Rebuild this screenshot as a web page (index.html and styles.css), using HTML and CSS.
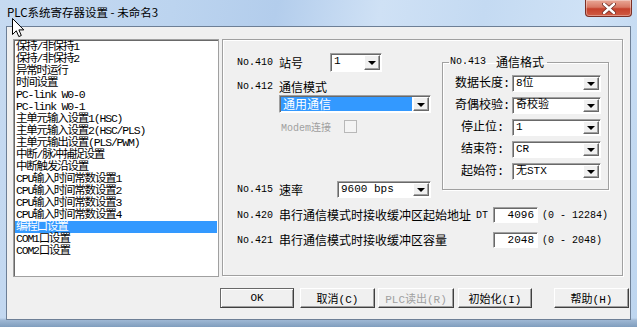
FILE: index.html
```html
<!DOCTYPE html>
<html lang="zh-CN">

<head>
    <meta charset="UTF-8">
    <meta name="viewport" content="width=device-width, initial-scale=1.0">
    <title>PLC系统寄存器设置</title>
    <link rel="stylesheet" href="styles.css">
</head>

<body>

    <div class="window">
        <div class="titlebar">
            <span class="title">PLC系统寄存器设置 - 未命名3</span>
            <div class="close">
                <svg width="14" height="11" viewBox="0 0 14 11">
                    <path d="M2 1 L12 10 M12 1 L2 10" stroke="#6b2a22" stroke-width="4" stroke-linecap="round" />
                    <path d="M2 1 L12 10 M12 1 L2 10" stroke="#fff" stroke-width="2.4" stroke-linecap="round" />
                </svg>
            </div>
        </div>

        <div class="client">
            <div class="main">
                <ul class="list">
                    <li>保持/非保持1</li>
                    <li>保持/非保持2</li>
                    <li>异常时运行</li>
                    <li>时间设置</li>
                    <li>PC-link W0-0</li>
                    <li>PC-link W0-1</li>
                    <li>主单元输入设置1(HSC)</li>
                    <li>主单元输入设置2(HSC/PLS)</li>
                    <li>主单元输出设置(PLS/PWM)</li>
                    <li>中断/脉冲捕捉设置</li>
                    <li>中断触发沿设置</li>
                    <li>CPU输入时间常数设置1</li>
                    <li>CPU输入时间常数设置2</li>
                    <li>CPU输入时间常数设置3</li>
                    <li>CPU输入时间常数设置4</li>
                    <li class="selected">编程口设置</li>
                    <li>COM1口设置</li>
                    <li>COM2口设置</li>
                </ul>

                <div class="panel">
                    <div class="top">
                        <div class="left">
                            <div class="row r410">
                                <span class="no">No.410</span>
                                <span class="lbl w-station">站号</span>
                                <div class="combo c-station"><span class="val">1</span><span class="drop"></span></div>
                            </div>
                            <div class="row r412">
                                <span class="no">No.412</span>
                                <span class="lbl">通信模式</span>
                            </div>
                            <div class="combo c-mode sel"><span class="val">通用通信</span><span class="drop"></span></div>
                            <div class="row modem">
                                <span class="disabled">Modem连接</span>
                                <span class="check"></span>
                            </div>
                            <div class="row r415">
                                <span class="no">No.415</span>
                                <span class="lbl w-rate">速率</span>
                                <div class="combo c-rate"><span class="val">9600 bps</span><span class="drop"></span></div>
                            </div>
                        </div>

                        <fieldset class="fmt">
                            <legend><span class="no">No.413</span><span class="legend-text">通信格式</span></legend>
                            <div class="frow">
                                <span class="flbl">数据长度:</span>
                                <div class="combo c-fmt"><span class="val">8位</span><span class="drop"></span></div>
                            </div>
                            <div class="frow">
                                <span class="flbl">奇偶校验:</span>
                                <div class="combo c-fmt"><span class="val">奇校验</span><span class="drop"></span></div>
                            </div>
                            <div class="frow">
                                <span class="flbl">停止位:</span>
                                <div class="combo c-fmt"><span class="val">1</span><span class="drop"></span></div>
                            </div>
                            <div class="frow">
                                <span class="flbl">结束符:</span>
                                <div class="combo c-fmt"><span class="val">CR</span><span class="drop"></span></div>
                            </div>
                            <div class="frow">
                                <span class="flbl">起始符:</span>
                                <div class="combo c-fmt"><span class="val">无STX</span><span class="drop"></span></div>
                            </div>
                        </fieldset>
                    </div>

                    <div class="row r420">
                        <span class="no">No.420</span>
                        <span class="lbl long">串行通信模式时接收缓冲区起始地址</span>
                        <span class="dt">DT</span>
                        <span class="num">4096</span>
                        <span class="range">(0 - 12284)</span>
                    </div>
                    <div class="row r421">
                        <span class="no">No.421</span>
                        <span class="lbl long">串行通信模式时接收缓冲区容量</span>
                        <span class="dt"></span>
                        <span class="num">2048</span>
                        <span class="range">(0 - 2048)</span>
                    </div>
                </div>
            </div>

            <div class="buttons">
                <button class="btn b-ok default">OK</button>
                <button class="btn b-cancel">取消(C)</button>
                <button class="btn b-read" disabled>PLC读出(R)</button>
                <button class="btn b-init">初始化(I)</button>
                <button class="btn b-help">帮助(H)</button>
            </div>
        </div>

        <svg class="cursor" width="13" height="20" viewBox="0 0 13 20">
            <path d="M0.5 0.5 L0.5 16.5 L4.3 12.8 L6.8 18.6 L9.3 17.5 L6.9 11.9 L11.8 11.9 Z" fill="#fff" stroke="#000" stroke-width="1" stroke-linejoin="miter" />
        </svg>
    </div>

</body>

</html>
```

FILE: styles.css
```css
    * {
      box-sizing: border-box;
    }

    body {
      margin: 0;
      background: #bcd3ec;
      font-family: "Liberation Mono", "Noto Sans CJK SC", monospace;
      font-size: 12px;
      color: #000;
    }

    /* aero frame */
    .window {
      position: relative;
      width: 637px;
      height: 327px;
      overflow: hidden;
      background:
        linear-gradient(to bottom, rgba(255, 255, 255, 0) 0, rgba(255, 255, 255, 0) 318px, #9fb8d4 320px, #7f9dbd 327px),
        linear-gradient(100deg, #c6daf1 0%, #bcd4ef 25%, #b3cdec 40%, #cfe1f5 55%, #c4daf2 70%, #cfe2f6 85%, #bdd5ef 100%);
    }

    .titlebar {
      height: 26px;
      display: flex;
      align-items: center;
    }

    .title {
      padding-left: 7px;
      font-family: "Noto Sans CJK SC", sans-serif;
      font-size: 11.5px;
      line-height: 14px;
      margin-top: -2px;
    }

    .close {
      margin-left: auto;
      margin-right: 5px;
      align-self: flex-start;
      width: 47px;
      height: 17px;
      display: flex;
      align-items: center;
      justify-content: center;
      border: 1px solid #7b2f25;
      border-top: none;
      border-radius: 0 0 4px 4px;
      background: linear-gradient(to bottom, #e9a897 0%, #d87864 45%, #c5412c 55%, #cf5c45 100%);
      box-shadow: inset 0 0 0 1px rgba(255, 255, 255, 0.35);
    }

    .client {
      margin-left: 6px;
      width: 625px;
      height: 294px;
      border: 1px solid #6d7f96;
      background: #f0f0f0;
      padding: 12px 0 0 6px;
    }

    .main {
      display: flex;
      align-items: flex-start;
    }

    /* list box */
    .list {
      margin: 0;
      padding: 1px 1px 0 1px;
      list-style: none;
      width: 206px;
      height: 238px;
      background: #fff;
      border: 1px solid #a0a0a0;
      box-shadow: inset 1px 1px #696969;
      overflow: hidden;
    }

    .list li {
      height: 12px;
      line-height: 12px;
      font-size: 11.5px;
      letter-spacing: -1.2px;
      padding-left: 1px;
      white-space: nowrap;
    }

    .list li.selected {
      background: #3399ff;
      color: #fff;
    }

    /* right panel */
    .panel {
      margin-left: 3px;
      width: 401px;
      height: 237px;
      border: 1px solid #a0a0a0;
      box-shadow: 1px 1px #fff, inset 1px 1px #fff;
    }

    .top {
      display: flex;
      align-items: flex-start;
    }

    .left {
      width: 219px;
      padding-left: 14px;
    }

    .row {
      display: flex;
      align-items: center;
    }

    .no {
      width: 42px;
      font-size: 10px;
      flex: none;
    }

    .lbl {
      font-family: "Noto Sans CJK SC", sans-serif;
      font-size: 12px;
      line-height: 14px;
      flex: none;
    }

    .w-station {
      width: 51px;
    }

    .w-rate {
      width: 58px;
    }

    .r410 {
      margin-top: 13px;
      height: 19px;
    }

    .r412 {
      margin-top: 6px;
      height: 17px;
    }

    .modem {
      margin-top: 5px;
      margin-left: 44px;
      height: 16px;
    }

    .disabled {
      width: 63px;
      color: #a0a0a0;
      font-size: 10px;
    }

    .check {
      width: 13px;
      height: 13px;
      border: 1px solid #b8b8b8;
      background: #f4f4f4;
    }

    .r415 {
      margin-top: 47px;
      height: 17px;
    }

    /* combo boxes */
    .combo {
      display: flex;
      background: #fff;
      border: 1px solid;
      border-color: #a0a0a0 #fff #fff #a0a0a0;
      box-shadow: inset 1px 1px #696969;
      padding: 1px;
      flex: none;
    }

    .combo .val {
      flex: 1;
      padding-left: 2px;
      font-size: 11px;
      line-height: 13px;
      white-space: nowrap;
    }

    .combo .drop {
      width: 16px;
      background: #f0f0f0;
      border: 1px solid;
      border-color: #fff #696969 #696969 #fff;
      box-shadow: inset -1px -1px #a0a0a0;
      display: flex;
      align-items: center;
      justify-content: center;
    }

    .combo .drop::after {
      content: "";
      border-left: 4px solid transparent;
      border-right: 4px solid transparent;
      border-top: 4px solid #000;
      margin-top: 1px;
    }

    .c-station {
      width: 52px;
      height: 19px;
    }

    .c-mode {
      margin-left: 42px;
      width: 152px;
      height: 18px;
    }

    .c-mode.sel .val {
      background: #3399ff;
      color: #fff;
      font-size: 12px;
      font-family: "Noto Sans CJK SC", sans-serif;
      line-height: 14px;
      margin-right: 1px;
    }

    .c-rate {
      width: 94px;
      height: 17px;
    }

    .c-fmt {
      width: 89px;
      height: 17px;
    }

    /* group box */
    .fmt {
      margin: 15px 0 0 0;
      padding: 0 7px 9px 0;
      width: 167px;
      min-width: 0;
      border: 1px solid #a0a0a0;
      box-shadow: inset 1px 1px #fff, 1px 1px #fff;
    }

    .fmt legend {
      margin-left: 6px;
      padding: 0 3px 0 1px;
      line-height: 14px;
      display: flex;
      align-items: center;
    }

    .fmt legend .no {
      width: auto;
    }

    .legend-text {
      margin-left: 10px;
      font-family: "Noto Sans CJK SC", sans-serif;
      font-size: 12px;
    }

    .frow {
      display: flex;
      align-items: center;
      height: 17px;
      margin-top: 5px;
    }

    .frow:first-of-type {
      margin-top: 6px;
    }

    .flbl {
      width: 69px;
      padding-left: 10px;
      text-align: center;
      font-size: 12px;
      line-height: 14px;
    }

    /* buffer rows */
    .r420 {
      margin-top: 9px;
      padding-left: 14px;
      height: 16px;
    }

    .r421 {
      margin-top: 9px;
      padding-left: 14px;
      height: 16px;
    }

    .long {
      width: 197px;
    }

    .dt {
      width: 17px;
      font-size: 10px;
    }

    .num {
      width: 45px;
      height: 16px;
      background: #fff;
      border: 1px solid;
      border-color: #a0a0a0 #fff #fff #a0a0a0;
      box-shadow: inset 1px 1px #696969;
      text-align: right;
      padding-right: 3px;
      font-size: 11px;
      line-height: 14px;
    }

    .range {
      margin-left: 4px;
      font-size: 10px;
    }

    /* dialog buttons */
    .buttons {
      display: flex;
      margin-top: 11px;
      margin-left: 207px;
    }

    .btn {
      height: 20px;
      padding: 0;
      background: #f0f0f0;
      border: 1px solid;
      border-color: #fff #404040 #404040 #fff;
      box-shadow: inset -1px -1px #a0a0a0;
      font-family: "Liberation Mono", "Noto Sans CJK SC", monospace;
      font-size: 11px;
      color: #000;
    }

    .btn.default {
      border-color: #696969 #404040 #404040 #696969;
      box-shadow: inset 1px 1px #fff, inset -1px -1px #a0a0a0;
    }

    .btn:disabled {
      color: #a0a0a0;
    }

    .b-ok {
      width: 74px;
    }

    .b-cancel {
      width: 75px;
      margin-left: 6px;
    }

    .b-read {
      width: 76px;
      margin-left: 3px;
    }

    .b-init {
      width: 74px;
      margin-left: 4px;
    }

    .b-help {
      width: 75px;
      margin-left: 22px;
    }

    .cursor {
      position: absolute;
      left: 12px;
      top: 18px;
    }
```
